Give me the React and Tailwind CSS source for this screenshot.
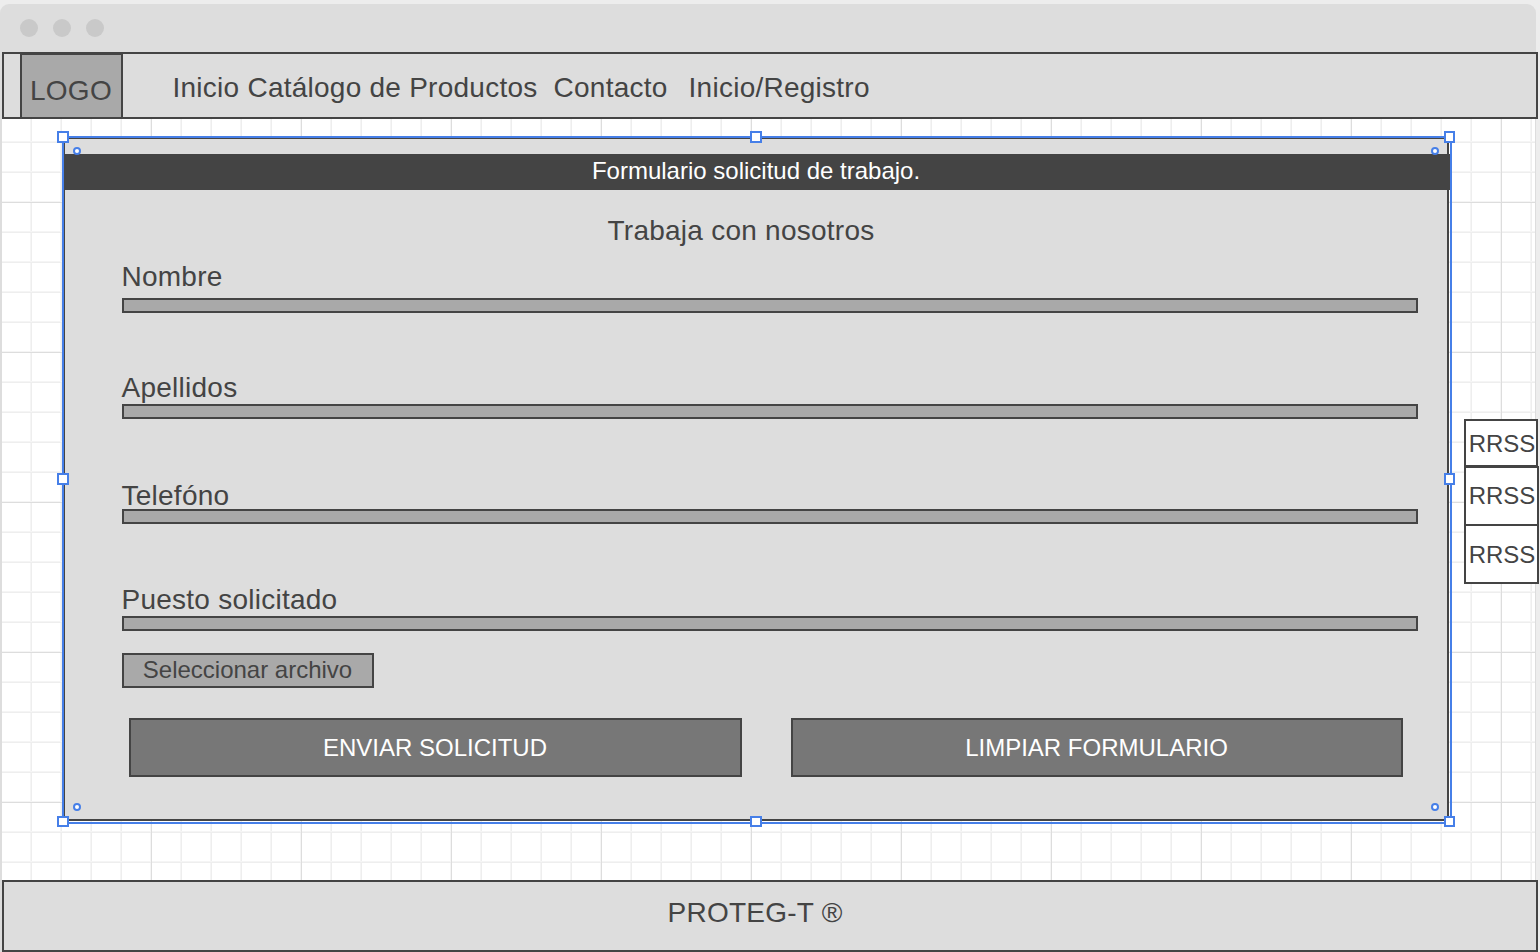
const columns = Array.from({ length: 51 }, (_, i) => 31 + i * 30);
const rows = Array.from({ length: 25 }, (_, i) => 142 + i * 30);

function CanvasGrid() {
  return (
    <svg className="absolute left-0 top-0 -z-10" width="1536" height="880" shapeRendering="crispEdges">
      <rect x="2" y="119" width="1533" height="761" fill="#ffffff" />
      {columns.filter((x) => x < 1534).map((x) => (
        <g key={x}>
          <rect x={x - 1} y="119" width="1" height="761" fill="#f5f5f5" />
          <rect x={x} y="119" width="1" height="761" fill="#eeeeee" />
        </g>
      ))}
      {rows.map((y) => (
        <g key={y}>
          <rect x="2" y={y - 1} width="1533" height="1" fill="#f5f5f5" />
          <rect x="2" y={y} width="1533" height="1" fill="#eeeeee" />
        </g>
      ))}
      {columns.filter((x) => x % 150 === 1).map((x) => (
        <rect key={x} x={x} y="119" width="1" height="761" fill="#dddddd" />
      ))}
      {rows.filter((y) => y % 150 === 52).map((y) => (
        <rect key={y} x="2" y={y} width="1533" height="1" fill="#dddddd" />
      ))}
    </svg>
  );
}

function Handle({ className }) {
  return <span className={`absolute border-2 border-[#467fe8] bg-white ${className}`} />;
}

function Knob({ className }) {
  return <span className={`absolute size-2 rounded-full border-2 border-[#467fe8] bg-white ${className}`} />;
}

function Field({ label, className, gap }) {
  return (
    <label className={`flex flex-col ${className}`}>
      <span className="-ml-[0.5px] block h-8 whitespace-nowrap text-[28px] leading-8 tracking-[0.25px]">{label}</span>
      <span className={`block h-[15px] w-[1296px] border-2 border-[#444] bg-[#a9a9a9] ${gap}`} />
    </label>
  );
}

function Social({ className }) {
  return (
    <a className={`flex items-center justify-center border-2 border-[#444] bg-white text-2xl ${className}`}>RRSS</a>
  );
}

export default function App() {
  return (
    <div className="relative isolate flex h-[952px] w-[1540px] flex-col overflow-hidden bg-[#ededed] pt-1 font-['Liberation_Sans',Arial,sans-serif] text-[#444]">
      <div className="absolute left-0 top-1 -z-20 h-[948px] w-[1536px] rounded-t-[9px] bg-[#ddd]" />
      <CanvasGrid />

      <div className="flex h-12 shrink-0 items-center gap-[15px] pl-5">
        <span className="size-[18px] rounded-full bg-[#c9c9c9]" />
        <span className="size-[18px] rounded-full bg-[#c9c9c9]" />
        <span className="size-[18px] rounded-full bg-[#c9c9c9]" />
      </div>

      <header className="ml-0.5 flex h-[67px] w-[1536px] shrink-0 border-2 border-[#444] bg-[#ddd] pl-4 text-[28px]">
        <div className="-mt-px h-[66px] w-[103px] shrink-0 border-2 border-[#444] bg-[#a9a9a9] pl-2 pt-5 leading-8 tracking-[0.25px]">
          LOGO
        </div>
        <nav className="flex whitespace-pre pl-[49.5px] pt-[18px] leading-8 tracking-[0.25px]">
          <a>Inicio </a>
          <a>Catálogo de Productos</a>
          <a className="pl-4">Contacto</a>
          <a className="pl-[21px]">Inicio/Registro</a>
        </nav>
      </header>

      <main className="flex h-[761px] shrink-0 items-start pl-[62px] pt-[17px]">
        <div className="relative h-[688px] w-[1390px] shrink-0 border-2 border-[#467fe8]">
          <form className="flex h-[683px] w-[1385px] flex-col border-b-2 border-l border-r-2 border-t border-[#444] bg-[#ddd] pt-[15px]">
            <h1 className="-ml-px h-9 w-[1386px] shrink-0 bg-[#444] pr-0.5 text-center text-2xl leading-[34px] text-white">
              Formulario solicitud de trabajo.
            </h1>
            <h2 className="mt-[25px] h-8 pr-[30px] text-center text-[28px] leading-8 tracking-[0.25px]">
              Trabaja con nosotros
            </h2>
            <div className="flex flex-col pl-[57px]">
              <Field label="Nombre" className="mt-[14px]" gap="mt-[5px]" />
              <Field label="Apellidos" className="mt-[59px]" gap="" />
              <Field label="Telefóno" className="mt-[61px]" gap="-mt-[3px]" />
              <Field label="Puesto solicitado" className="mt-[60px]" gap="" />
              <button
                type="button"
                className="mt-[22px] h-[35px] w-[252px] border-2 border-[#444] bg-[#a9a9a9] pb-0.5 pr-px text-2xl leading-[29px]"
              >
                Seleccionar archivo
              </button>
            </div>
            <div className="mt-[30px] flex gap-[49px] pl-16 text-2xl text-white">
              <button type="button" className="h-[59px] w-[613px] border-2 border-[#444] bg-[#777] pr-px">
                ENVIAR SOLICITUD
              </button>
              <button type="button" className="h-[59px] w-[612px] border-2 border-[#444] bg-[#777] pr-px">
                LIMPIAR FORMULARIO
              </button>
            </div>
          </form>

          <Knob className="left-[9px] top-[9px]" />
          <Knob className="left-[1367px] top-[9px]" />
          <Knob className="left-[9px] top-[665px]" />
          <Knob className="left-[1367px] top-[665px]" />
          <Handle className="-left-[7px] -top-[7px] h-3 w-3" />
          <Handle className="-top-[7px] left-[686px] h-3 w-3" />
          <Handle className="-top-[7px] left-[1380px] h-3 w-[11px]" />
          <Handle className="-left-[7px] top-[335px] h-3 w-3" />
          <Handle className="left-[1380px] top-[335px] h-3 w-[11px]" />
          <Handle className="-left-[7px] top-[678px] h-[11px] w-3" />
          <Handle className="left-[686px] top-[678px] h-[11px] w-3" />
          <Handle className="left-[1380px] top-[678px] h-[11px] w-[11px]" />
        </div>

        <aside className="ml-3 mt-[283px] flex flex-col">
          <Social className="h-12 w-[74px] pl-0.5 pt-0.5" />
          <Social className="-mt-px h-[60px] w-[75px] pl-px" />
          <Social className="-mt-0.5 h-[60px] w-[75px] pl-px pt-0.5" />
        </aside>
      </main>

      <footer className="ml-0.5 h-[72px] w-[1536px] shrink-0 border-2 border-[#444] bg-[#ddd] pl-[663.5px] pt-[15px] text-[28px] leading-8 tracking-[0.25px]">
        PROTEG-T ®
      </footer>
    </div>
  );
}
